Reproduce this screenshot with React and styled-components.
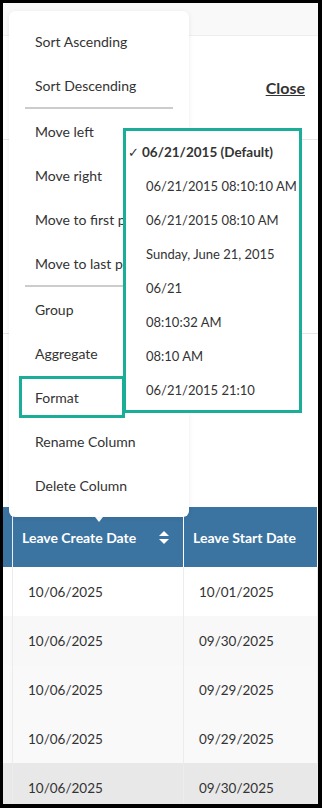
import React from 'react';
import styled, { createGlobalStyle } from 'styled-components';

const teal = '#1aae98';
const blue = '#3b73a1';

const menuItems = [
    { label: 'Sort Ascending' },
    { label: 'Sort Descending', divider: true },
    { label: 'Move left' },
    { label: 'Move right' },
    { label: 'Move to first position' },
    { label: 'Move to last position', divider: true },
    { label: 'Group' },
    { label: 'Aggregate' },
    { label: 'Format', highlighted: true },
    { label: 'Rename Column' },
    { label: 'Delete Column' },
];

const formats = [
    '06/21/2015 08:10:10 AM',
    '06/21/2015 08:10 AM',
    'Sunday, June 21, 2015',
    '06/21',
    '08:10:32 AM',
    '08:10 AM',
    '06/21/2015 21:10',
];

const rows = [
    ['10/06/2025', '10/01/2025'],
    ['10/06/2025', '09/30/2025'],
    ['10/06/2025', '09/29/2025'],
    ['10/06/2025', '09/29/2025'],
    ['10/06/2025', '09/30/2025'],
];

const SortIcon = () => (
    <svg width="10" height="13" viewBox="0 0 10 13">
        <path d="M5 0 L10 5 H0 Z" fill="#fff" />
        <path d="M5 13 L10 8 H0 Z" fill="#fff" />
    </svg>
);

export default function App() {
    return (
        <>
            <GlobalStyle />
            <Frame>
                <TopStrip />
                <HeaderSection>
                    <CloseLink>Close</CloseLink>
                </HeaderSection>
                <Section height={194} />
                <Section height={173} borderless />

                <Table>
                    <HeadCell narrow />
                    <HeadCell>
                        <Caret />
                        Leave Create Date
                        <SortIcon />
                    </HeadCell>
                    <HeadCell>Leave Start Date</HeadCell>
                    {rows.map((row, i) => (
                        <React.Fragment key={i}>
                            <Cell narrow tone={i}></Cell>
                            <Cell tone={i}>{row[0]}</Cell>
                            <Cell tone={i}>{row[1]}</Cell>
                        </React.Fragment>
                    ))}
                </Table>

                <Menu>
                    {menuItems.map((item) => (
                        <React.Fragment key={item.label}>
                            <MenuItem>
                                {item.highlighted
                                    ? <HighlightBox>{item.label}</HighlightBox>
                                    : <MenuLabel>{item.label}</MenuLabel>}
                            </MenuItem>
                            {item.divider && <Divider />}
                        </React.Fragment>
                    ))}
                </Menu>

                <SubMenu>
                    <SubItem selected>
                        <Check>✓</Check>06/21/2015 (Default)
                    </SubItem>
                    {formats.map((f) => (
                        <SubItem key={f}>{f}</SubItem>
                    ))}
                </SubMenu>
            </Frame>
        </>
    );
}

const GlobalStyle = createGlobalStyle`
    html, body {
        margin: 0;
        padding: 0;
        background: #000;
    }
    body {
        font-family: Lato, "Open Sans", Arial, sans-serif;
        color: #333;
    }
    * {
        box-sizing: border-box;
    }
`;

const Frame = styled.div`
    position: relative;
    margin: 3px 4px 4px 3px;
    width: 315px;
    height: 801px;
    background: #fff;
    overflow: hidden;
    display: flex;
    flex-direction: column;
`;

const TopStrip = styled.div`
    height: 33px;
    flex-shrink: 0;
    background: #f9f9f9;
    border-bottom: 1px solid #eeeeee;
`;

const HeaderSection = styled.div`
    height: 104px;
    flex-shrink: 0;
    display: flex;
    align-items: center;
    justify-content: flex-end;
    padding: 0 13px 0 0;
    border-bottom: 1px solid #e6e6e6;
`;

const CloseLink = styled.a`
    font-size: 16px;
    font-weight: 700;
    color: #333;
    text-decoration: underline;
    cursor: pointer;
`;

const Section = styled.div`
    height: ${({ height }) => height}px;
    flex-shrink: 0;
    border-bottom: ${({ borderless }) => (borderless ? 'none' : '1px solid #e6e6e6')};
`;

const Table = styled.div`
    display: grid;
    grid-template-columns: 10px 171px 1fr;
    grid-auto-rows: 49px;
    grid-template-rows: 60px;
`;

const HeadCell = styled.div`
    position: relative;
    background: ${blue};
    color: #fff;
    font-size: 14px;
    font-weight: 700;
    display: flex;
    align-items: center;
    justify-content: space-between;
    padding: ${({ narrow }) => (narrow ? '0' : '0 14px 0 9px')};
    border-right: 1px solid ${({ narrow }) => (narrow ? '#e8eef3' : '#ffffff')};
    white-space: nowrap;
`;

const Caret = styled.span`
    position: absolute;
    top: 10px;
    left: 82px;
    width: 0;
    height: 0;
    border-left: 4px solid transparent;
    border-right: 4px solid transparent;
    border-top: 5px solid #fff;
`;

const rowTones = ['#ffffff', '#f8f8f8', '#f9f9f9', '#f9f9f9', '#e8e8e8'];

const Cell = styled.div`
    background: ${({ tone }) => rowTones[tone]};
    border-right: 1px solid #ececec;
    display: flex;
    align-items: center;
    padding-left: ${({ narrow }) => (narrow ? '0' : '15px')};
    font-size: 13.5px;
    color: #333;
    white-space: nowrap;
`;

const Menu = styled.div`
    position: absolute;
    top: 8px;
    left: 6px;
    width: 180px;
    padding: 8px 0 10px;
    background: #fff;
    border-radius: 6px;
    box-shadow: 0 1px 5px rgba(0, 0, 0, 0.08);
    display: flex;
    flex-direction: column;
`;

const MenuItem = styled.div`
    height: 44px;
    display: flex;
    align-items: center;
    font-size: 14px;
    color: #333;
    white-space: nowrap;
    overflow: hidden;
`;

const MenuLabel = styled.span`
    padding-left: 26px;
`;

const HighlightBox = styled.span`
    margin-left: 10px;
    width: 106px;
    height: 42px;
    border: 3px solid ${teal};
    padding-left: 13px;
    display: flex;
    align-items: center;
`;

const Divider = styled.div`
    height: 2px;
    margin: 0 16px;
    background: #cccccc;
`;

const SubMenu = styled.div`
    position: absolute;
    top: 125px;
    left: 120px;
    width: 179px;
    padding: 4px 0 3px;
    background: #fff;
    border: 3px solid ${teal};
    display: flex;
    flex-direction: column;
`;

const SubItem = styled.div`
    height: 34px;
    display: flex;
    align-items: center;
    padding-left: ${({ selected }) => (selected ? '2px' : '20px')};
    font-size: ${({ selected }) => (selected ? '13.5px' : '13px')};
    font-weight: ${({ selected }) => (selected ? 700 : 400)};
    color: #333;
    white-space: nowrap;
`;

const Check = styled.span`
    width: 14px;
    font-weight: 400;
    font-size: 13px;
`;
